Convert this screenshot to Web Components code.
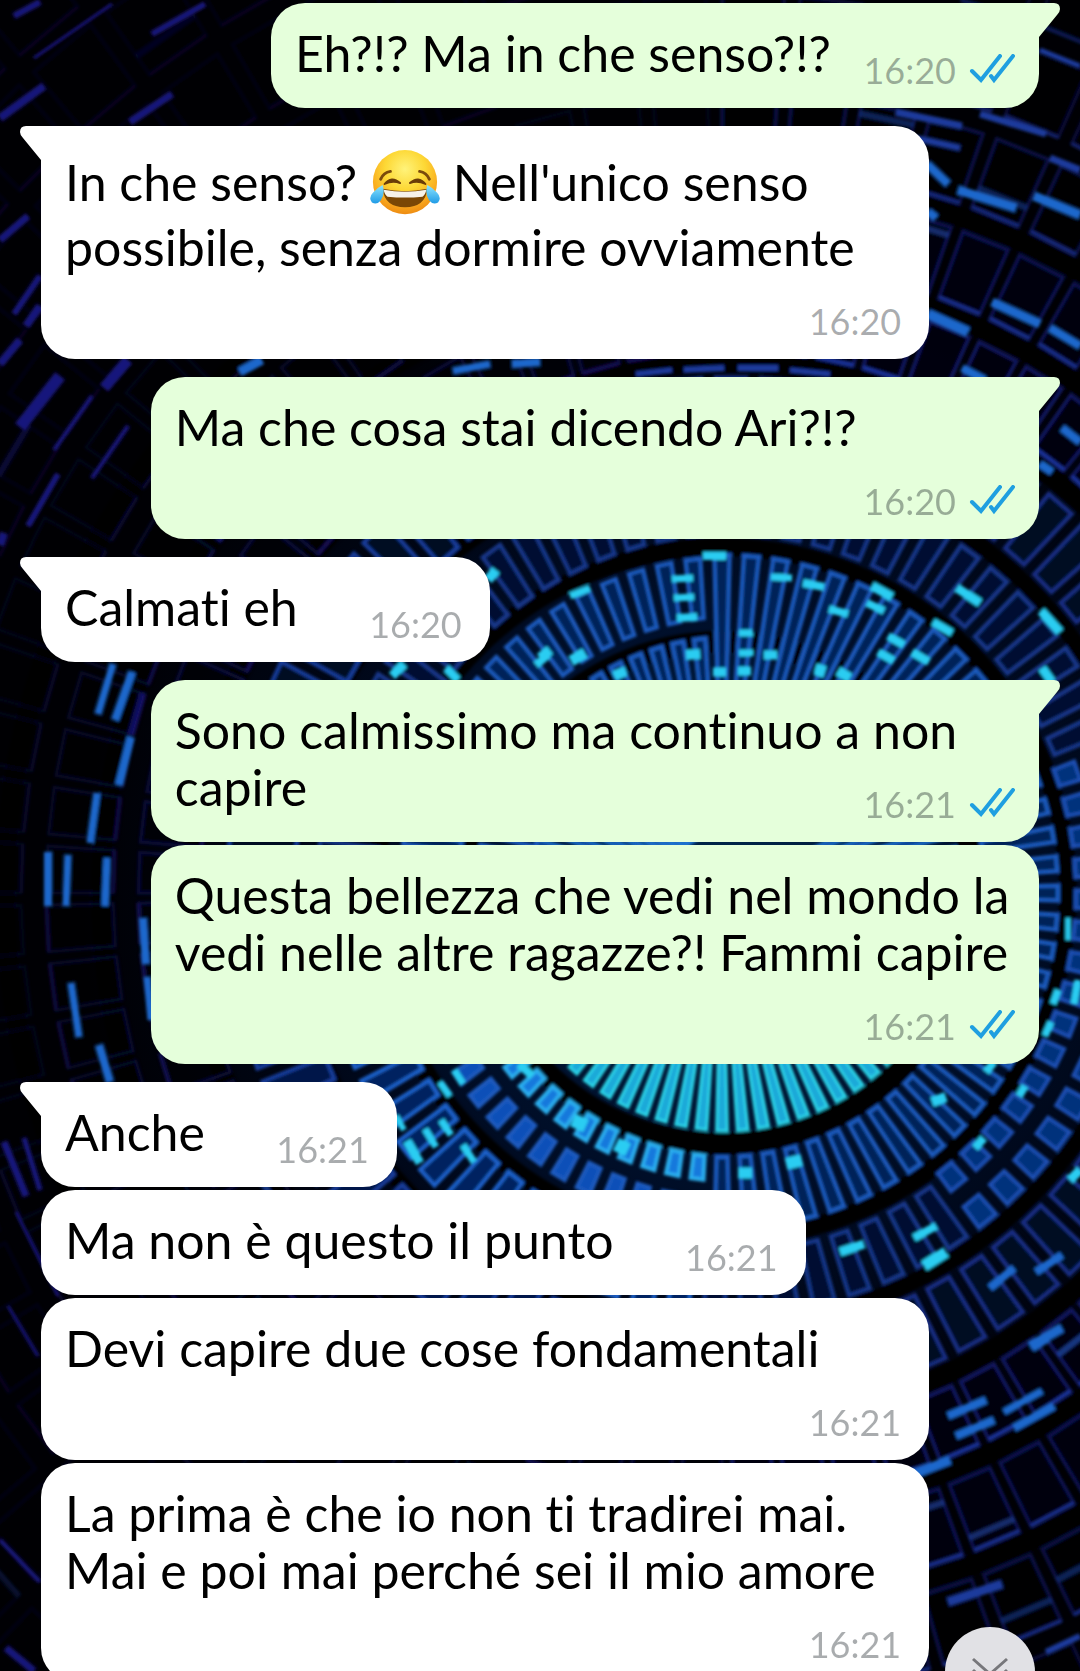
<!DOCTYPE html>
<html lang="it">
<head>
<meta charset="utf-8">
<meta name="viewport" content="width=device-width, initial-scale=1">
<title>Chat</title>
<style>
    html {
        height: 100%;
        background: #000;
    }
    body {
        margin: 0;
        height: 100%;
        overflow: hidden;
        font-family: Lato, "Open Sans", sans-serif;
        font-variant-ligatures: none;
        color: #000;
    }
</style>
</head>
<body>
<chat-wallpaper></chat-wallpaper>
<chat-thread>
    <chat-group side="out">
        <chat-bubble side="out" tail time="16:20">Eh?!? Ma in che senso?!?</chat-bubble>
    </chat-group>
    <chat-group side="in">
        <chat-bubble side="in" tail time="16:20">In che senso? <joy-emoji></joy-emoji> Nell'unico senso possibile, senza dormire ovviamente</chat-bubble>
    </chat-group>
    <chat-group side="out">
        <chat-bubble side="out" tail time="16:20">Ma che cosa stai dicendo Ari?!?</chat-bubble>
    </chat-group>
    <chat-group side="in">
        <chat-bubble side="in" tail time="16:20">Calmati eh</chat-bubble>
    </chat-group>
    <chat-group side="out">
        <chat-bubble side="out" tail time="16:21">Sono calmissimo ma continuo a non capire</chat-bubble>
        <chat-bubble side="out" time="16:21">Questa bellezza che vedi nel mondo la vedi nelle altre ragazze?! Fammi capire</chat-bubble>
    </chat-group>
    <chat-group side="in">
        <chat-bubble side="in" tail time="16:21">Anche</chat-bubble>
        <chat-bubble side="in" time="16:21">Ma non è questo il punto</chat-bubble>
        <chat-bubble side="in" time="16:21">Devi capire due cose fondamentali</chat-bubble>
        <chat-bubble side="in" time="16:21">La prima è che io non ti tradirei mai. Mai e poi mai perché sei il mio amore</chat-bubble>
    </chat-group>
</chat-thread>
<scroll-down></scroll-down>

<script>
class ChatWallpaper extends HTMLElement {
    constructor() {
        super();
        this.attachShadow({ mode: "open" });
        this.shadowRoot.innerHTML =
            `
            <style>
            :host{
                position: fixed;
                inset: 0;
                z-index: -1;
                background: #000004;
            }
            svg{
                display: block;
                width: 100%;
                height: 100%;
            }
            </style>
            <svg viewBox="0 0 1080 1671" preserveAspectRatio="xMidYMid slice" aria-hidden="true">
                <defs>
                    <radialGradient id="glow" gradientUnits="userSpaceOnUse" cx="722" cy="893" r="640">
                        <stop offset="0" stop-color="#00284e"/>
                        <stop offset="0.4" stop-color="#00102c"/>
                        <stop offset="0.7" stop-color="#000616"/>
                        <stop offset="1" stop-color="#000004"/>
                    </radialGradient>
                    <filter id="soft" x="0" y="0" width="100%" height="100%"><feGaussianBlur stdDeviation="1.5"/></filter>
                </defs>
                <rect width="1080" height="1671" fill="url(#glow)"/>
                <g id="rings" filter="url(#soft)">${this.gaps()}${this.cells()}${this.stripes()}</g>
            </svg>
            `
    }

    // polar to page point, the rings are a bit flatter on the left
    point(r, deg) {
        let a = deg * Math.PI / 180;
        let k = 1 - 0.04 * Math.max(0, -Math.cos(a));
        return (722 + r * k * Math.cos(a)).toFixed(1) + " " + (893 + r * k * Math.sin(a)).toFixed(1);
    }

    noise(n) {
        let s = Math.sin(n * 127.1 + 11.7) * 43758.5453;
        return s - Math.floor(s);
    }

    quad(r1, r2, a, half1, half2) {
        return `M${this.point(r1, a - half1)}L${this.point(r2, a - half2)}L${this.point(r2, a + half2)}L${this.point(r1, a + half1)}Z`;
    }

    gaps() {
        return [[251, 22], [346, 18], [433, 16], [531, 20], [621, 20], [717, 20]]
            .map(g => `<circle cx="722" cy="893" r="${g[0]}" fill="none" stroke="#000003" stroke-width="${g[1]}"/>`).join("");
    }

    cells() {
        let out = "";
        for (let i = 0; i < 72; i++) {
            let a = i * 5;
            let left = a > 92 && a < 268;
            let right = a < 52 || a > 335;
            let bottom = a > 20 && a < 160;
            let lowerLeft = a > 92 && a < 180;
            let topRight = a >= 268 && a < 335;
            // inner spokes, they run through to the second ring at the top right
            if (!topRight) {
                out += `<path d="${this.quad(60, 238, a, 1.2, 1.3)}" fill="${bottom ? "#1fa8d8" : "#0a4496"}" stroke="${bottom ? "#2cd8ea" : "#1d72d0"}" stroke-width="3"/>`;
            }
            // second ring, split in two on the left half
            let second = [[264, 336]];
            if (lowerLeft) second = [[264, 288], [306, 334]];
            else if (left) second = [[200, 256], [276, 336]];
            else if (topRight) second = [[150, 338]];
            second.forEach((s, n) => {
                let lit = lowerLeft && n == 0;
                out += this.box(s[0], s[1], a, 1.3, lit ? "#1478dc" : lowerLeft ? "#0b50b8" : "#042458", lit ? "#2cb0f0" : "#1c5cc0");
            });
            let third = right ? [[354, 376], [396, 422]] : [[360, 422]];
            third.forEach(s => {
                out += this.box(s[0], s[1], a + 1, 1.5, right ? "#06307c" : lowerLeft ? "#032460" : "#010e30", right ? "#1a50b4" : lowerLeft ? "#1c62cc" : "#14388c");
            });
            out += this.box(446, 516, a + 1, 1.7, lowerLeft ? "#02164a" : "#010820", left ? "#133c9c" : "#152f86");
        }
        [[544, 608], [634, 704], [730, 803], [827, 900], [924, 1000], [1022, 1100], [1122, 1200]].forEach((ring, n) => {
            for (let i = 0; i < 72; i++) {
                let a = i * 5 + 2;
                let r1 = ring[0], r2 = ring[1];
                let upper = a > 180;
                let left = a > 90 && a < 270;
                let dim = Math.max(0.12, 0.8 - n * 0.12 - (left ? 0.4 : 0));
                out += `<path d="${this.quad(r1, r2, a, 2, 2)}" fill="#00020c" stroke="#171f80" stroke-width="3" opacity="${dim.toFixed(2)}"/>`;
                let edge = upper ? r1 : r2;
                out += `<path d="M${this.point(edge, a - 2)}L${this.point(edge, a + 2)}" stroke="${left ? "#241a86" : "#1f3cae"}" stroke-width="4" opacity="${dim.toFixed(2)}"/>`;
                if (this.noise(n * 90 + i) > 0.84) {
                    let r = r1 + (r2 - r1) * this.noise(i * 7 + n);
                    let hue = left && upper && a > 195 ? "#1b1a96" : "#1f4cb4";
                    out += `<path d="M${this.point(r, a - 2)}L${this.point(r, a + 2)}" stroke="${hue}" stroke-width="6" opacity="${Math.max(0.2, 0.7 - n * 0.12).toFixed(2)}"/>`;
                }
            }
        });
        return out;
    }

    box(r1, r2, a, half, fill, stroke) {
        return `<path d="${this.quad(r1, r2, a, half * 0.95, half)}" fill="${fill}" stroke="${stroke}" stroke-width="4"/>`;
    }

    // bright stripes: x1 y1 x2 y2 width, then colour
    stripes() {
        let cyan = [
            [570, 596, 590, 588, 7], [672, 579, 693, 578, 7], [674, 598, 694, 597, 7], [677, 618, 697, 617, 8],
            [703, 556, 726, 556, 8], [739, 633, 753, 633, 7], [739, 653, 753, 653, 7], [738, 671, 751, 671, 9],
            [771, 577, 792, 578, 7], [803, 583, 824, 587, 8], [829, 609, 848, 614, 8], [872, 586, 892, 597, 9],
            [867, 603, 884, 611, 8], [888, 636, 904, 645, 8], [878, 652, 894, 661, 8], [933, 622, 952, 633, 8],
            [912, 652, 929, 662, 8], [764, 655, 777, 655, 9], [815, 669, 825, 672, 12], [686, 655, 700, 654, 10],
            [713, 672, 726, 672, 9], [614, 676, 626, 671, 10], [571, 661, 585, 653, 11], [540, 658, 550, 650, 10],
            [488, 580, 496, 570, 10], [536, 665, 548, 655, 8], [446, 668, 458, 680, 8], [392, 676, 404, 664, 9],
            [838, 671, 850, 678, 10], [957, 588, 980, 603, 9], [1041, 611, 1060, 632, 9], [1042, 668, 1052, 682, 9],
            [440, 1082, 450, 1096, 7], [454, 1070, 463, 1084, 7], [407, 1141, 420, 1163, 9], [425, 1129, 436, 1147, 7],
            [441, 1120, 451, 1135, 7], [463, 1145, 474, 1162, 7], [396, 1116, 404, 1130, 6], [519, 1064, 532, 1076, 8],
            [573, 1120, 586, 1126, 14], [616, 1144, 628, 1150, 14], [738, 1173, 752, 1173, 11], [786, 1164, 802, 1160, 12],
            [932, 1102, 946, 1097, 10], [1025, 1086, 1019, 1096, 8], [984, 1138, 975, 1148, 8], [986, 1072, 994, 1062, 8],
            [840, 1252, 864, 1244, 9], [914, 1238, 936, 1226, 8], [924, 1266, 946, 1252, 11], [1070, 1180, 1080, 1170, 9],
            [1058, 990, 1053, 1004, 7], [1078, 980, 1074, 1004, 7], [1051, 1022, 1045, 1036, 7], [1068, 918, 1068, 940, 5]
        ];
        let blue = [
            [958, 190, 1016, 208, 9], [927, 164, 948, 184, 8], [1034, 196, 1080, 215, 9], [992, 302, 1040, 324, 9],
            [928, 314, 968, 332, 10], [928, 212, 936, 218, 8], [1050, 328, 1080, 346, 8], [962, 368, 985, 380, 8],
            [1062, 428, 1080, 442, 8], [1040, 464, 1052, 472, 8],
            [48, 852, 48, 906, 8], [68, 855, 66, 906, 7], [107, 858, 105, 906, 7], [97, 793, 90, 843, 7],
            [131, 737, 119, 785, 8], [113, 664, 98, 714, 7], [132, 672, 115, 720, 8], [143, 918, 146, 964, 8],
            [147, 977, 151, 1020, 7], [71, 983, 79, 1037, 7], [99, 1045, 110, 1082, 8],
            [990, 1288, 1014, 1268, 8], [1036, 1272, 1062, 1255, 8], [1030, 1346, 1062, 1328, 9],
            [948, 1416, 986, 1400, 8], [956, 1436, 994, 1420, 8], [1004, 1412, 1042, 1391, 7], [1014, 1428, 1054, 1406, 8],
            [914, 1474, 950, 1460, 9], [1032, 1348, 1048, 1338, 8],
            [453, 371, 490, 364, 7], [512, 364, 540, 362, 8], [240, 372, 262, 360, 9]
        ];
        let navy = [
            [896, 112, 962, 126, 7], [916, 138, 960, 148, 6], [980, 114, 1046, 134, 7], [1050, 158, 1080, 170, 7],
            [948, 1602, 1002, 1584, 9], [1046, 1652, 1080, 1636, 6], [684, 370, 724, 368, 6], [738, 368, 778, 368, 6],
            [636, 374, 672, 370, 5], [790, 370, 830, 374, 5], [1040, 50, 1080, 66, 5]
        ];
        let violet = [
            [20, 427, 60, 376, 12], [104, 388, 128, 360, 11], [54, 450, 92, 396, 4], [92, 478, 128, 426, 4],
            [28, 526, 58, 474, 6], [0, 545, 4, 533, 8], [152, 34, 205, 4, 6], [130, 122, 172, 94, 7],
            [0, 118, 44, 86, 8], [14, 16, 40, 2, 6], [34, 58, 112, 4, 3], [0, 240, 28, 216, 7],
            [14, 314, 40, 276, 6], [26, 326, 40, 306, 8], [0, 364, 20, 340, 8], [4, 1142, 26, 1196, 7],
            [24, 1138, 40, 1190, 5], [16, 1212, 58, 1296, 3], [8, 1306, 38, 1356, 3], [0, 1540, 40, 1582, 4],
            [6, 1648, 34, 1671, 7]
        ];
        let lines = (list, colour) => list.map(s => `<path d="M${s[0]} ${s[1]}L${s[2]} ${s[3]}" stroke="${colour}" stroke-width="${s[4]}"/>`).join("");
        return lines(violet, "#19127c") + lines(navy, "#1c3a9c") + lines(blue, "#1f68cc") + lines(cyan, "#2ccdf2");
    }
}

class ChatThread extends HTMLElement {
    constructor() {
        super();
        this.attachShadow({ mode: "open" });
        this.shadowRoot.innerHTML =
            `
            <style>
            :host{
                display: flex;
                flex-direction: column;
                gap: 18px;
                padding: 3px 41px 0;
            }
            </style>
            <slot></slot>
            `
    }
}

class ChatGroup extends HTMLElement {
    constructor() {
        super();
        this.attachShadow({ mode: "open" });
        this.shadowRoot.innerHTML =
            `
            <style>
            :host{
                display: flex;
                flex-direction: column;
                align-items: flex-start;
                gap: 3px;
            }
            :host([side="out"]){
                align-items: flex-end;
            }
            </style>
            <slot></slot>
            `
    }
}

class ChatBubble extends HTMLElement {
    constructor() {
        super();
        this.attachShadow({ mode: "open" });
        let sent = this.getAttribute("side") == "out";
        this.shadowRoot.innerHTML =
            `
            <style>
            :host{
                --paper: #fff;
                --meta: 168px;
                display: block;
                position: relative;
                box-sizing: border-box;
                max-width: 89%;
                padding: 22px 24px 26px;
                border-radius: 34px;
                background: var(--paper);
                font-size: 50px;
                line-height: 57px;
            }
            :host([side="out"]){
                --paper: #e5ffdb;
                --meta: 184px;
            }
            :host([side="in"][tail]){
                border-top-left-radius: 0;
            }
            :host([side="out"][tail]){
                border-top-right-radius: 0;
            }
            p{
                margin: 0;
            }
            .room{
                display: inline-block;
                width: var(--meta);
                height: 1px;
            }
            .meta{
                position: absolute;
                right: 24px;
                bottom: 16px;
                display: flex;
                align-items: center;
                gap: 13px;
                font-size: 36px;
                line-height: 44px;
                color: rgba(8, 16, 24, 0.35);
            }
            :host([side="in"]) .meta{
                right: 28px;
            }
            .tail{
                position: absolute;
                top: 0;
                right: 100%;
                display: none;
                fill: var(--paper);
            }
            :host([tail]) .tail{
                display: block;
            }
            :host([side="out"]) .tail{
                right: auto;
                left: 100%;
                transform: scaleX(-1);
            }
            </style>
            <svg class="tail" width="21" height="34" viewBox="0 0 21 34" aria-hidden="true"><path d="M21 0H6Q0 0 0 6Q0 9 3 12L21 34Z"/></svg>
            <p><slot></slot><span class="room"></span></p>
            <div class="meta"><time>${this.getAttribute("time")}</time>${sent ? "<read-ticks></read-ticks>" : ""}</div>
            `
    }
}

class ReadTicks extends HTMLElement {
    constructor() {
        super();
        this.attachShadow({ mode: "open" });
        this.shadowRoot.innerHTML =
            `
            <style>
            :host{
                display: block;
                height: 44px;
            }
            </style>
            <svg width="46" height="30" viewBox="0 0 46 30" fill="none" stroke="#1f9fe0" stroke-width="4" stroke-linecap="round" stroke-linejoin="miter" role="img" aria-label="Letto">
                <path d="M3 17L12 26L31 2"/>
                <path d="M22 22L25 26L44 2"/>
            </svg>
            `
    }
}

class JoyEmoji extends HTMLElement {
    constructor() {
        super();
        this.attachShadow({ mode: "open" });
        this.shadowRoot.innerHTML =
            `
            <style>
            :host{
                display: inline-block;
                height: 71px;
                vertical-align: -18px;
            }
            svg{
                display: block;
            }
            </style>
            <svg width="70" height="71" viewBox="0 0 72 71" role="img" aria-label="risata con lacrime">
                <defs>
                    <radialGradient id="face" cx="0.5" cy="0.3" r="0.7">
                        <stop offset="0" stop-color="#fff37a"/>
                        <stop offset="0.45" stop-color="#fdd835"/>
                        <stop offset="0.8" stop-color="#f9a91e"/>
                        <stop offset="1" stop-color="#ee8c12"/>
                    </radialGradient>
                    <linearGradient id="tear" x1="0" y1="0" x2="0" y2="1">
                        <stop offset="0" stop-color="#8ee6ff"/>
                        <stop offset="1" stop-color="#1f9be6"/>
                    </linearGradient>
                </defs>
                <circle cx="36" cy="34" r="33" fill="url(#face)"/>
                <path d="M11 31Q14 24 21 23M51 23Q58 24 61 31" fill="none" stroke="#7a4a0c" stroke-width="3" stroke-linecap="round"/>
                <path d="M15 36Q22 27 31 35Q23 32 15 36ZM41 35Q50 27 57 36Q49 32 41 35Z" fill="#6b3d08" stroke="#6b3d08" stroke-width="2" stroke-linejoin="round"/>
                <path d="M13 41Q36 46 59 41Q57 60 36 60Q15 60 13 41Z" fill="#7a4705"/>
                <path d="M14 42Q36 46 58 42Q57 47 54 49Q36 51 18 49Q15 47 14 42Z" fill="#f6f2ea"/>
                <path d="M13 37Q16 46 11 53Q7 58 2 55Q-2 50 3 45Q7 40 13 37Z" fill="url(#tear)"/>
                <path d="M59 37Q56 46 61 53Q65 58 70 55Q74 50 69 45Q65 40 59 37Z" fill="url(#tear)"/>
            </svg>
            `
    }
}

class ScrollDown extends HTMLElement {
    constructor() {
        super();
        this.attachShadow({ mode: "open" });
        this.shadowRoot.innerHTML =
            `
            <style>
            :host{
                position: fixed;
                right: 45px;
                bottom: -46px;
            }
            button{
                display: grid;
                place-items: center;
                width: 90px;
                height: 90px;
                padding: 0;
                border: none;
                border-radius: 50%;
                background: #e1e1e5;
                cursor: pointer;
            }
            </style>
            <button aria-label="Vai in fondo">
                <svg width="40" height="32" viewBox="0 0 40 32" fill="none" stroke="#77777b" stroke-width="3" aria-hidden="true">
                    <path d="M3 3L20 18L37 3"/>
                    <path d="M3 14L20 29L37 14"/>
                </svg>
            </button>
            `
        this.shadowRoot.querySelector("button").addEventListener("click", () => {
            document.querySelector("chat-thread").lastElementChild.scrollIntoView({ block: "end" });
        })
    }
}

window.customElements.define("chat-wallpaper", ChatWallpaper)
window.customElements.define("chat-thread", ChatThread)
window.customElements.define("chat-group", ChatGroup)
window.customElements.define("read-ticks", ReadTicks)
window.customElements.define("joy-emoji", JoyEmoji)
window.customElements.define("chat-bubble", ChatBubble)
window.customElements.define("scroll-down", ScrollDown)
</script>
</body>
</html>
